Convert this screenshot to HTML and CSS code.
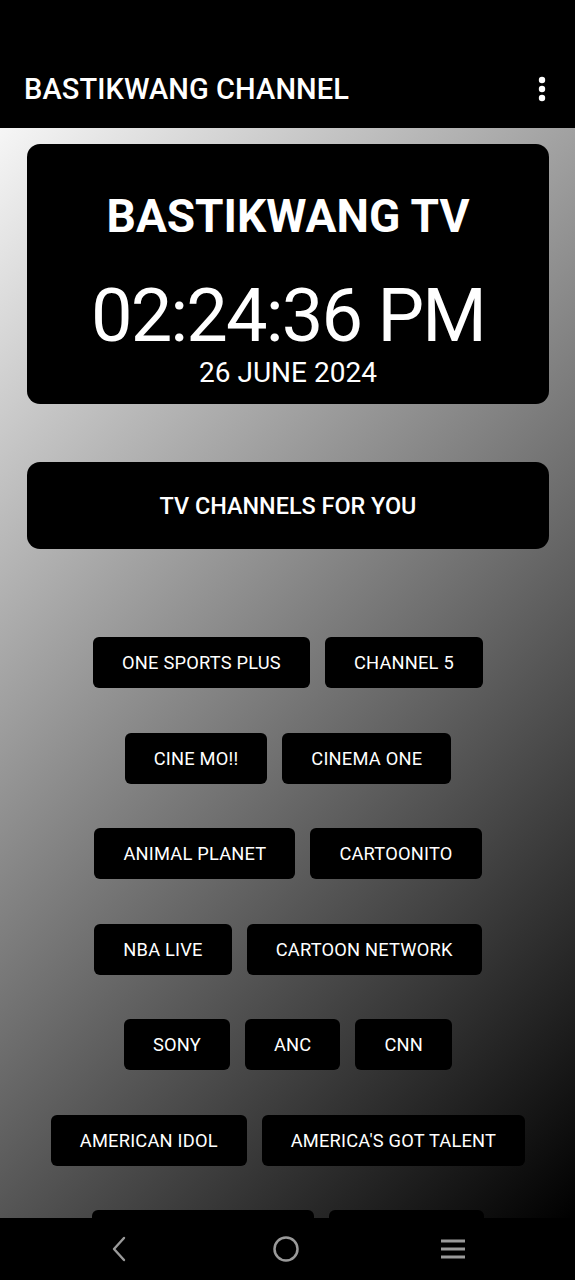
FILE: index.html
```html
<!DOCTYPE html>
<html lang="en">
<head>
    <meta charset="UTF-8">
    <meta name="viewport" content="width=device-width, initial-scale=1.0">
    <title>Bastikwang Channel</title>
    <link rel="stylesheet" href="styles.css">
</head>
<body>
    <div class="app">
        <header class="appbar">
            <h1>BASTIKWANG CHANNEL</h1>
            <button class="menu" aria-label="More options">
                <svg width="8" height="26" viewBox="0 0 8 26">
                    <circle cx="4" cy="4" r="3.2" fill="#fff"/>
                    <circle cx="4" cy="13" r="3.2" fill="#fff"/>
                    <circle cx="4" cy="22" r="3.2" fill="#fff"/>
                </svg>
            </button>
        </header>

        <main class="content">
            <section class="clock-card">
                <div class="clock-title">BASTIKWANG TV</div>
                <div class="clock-time" id="time">02:24:36 PM</div>
                <div class="clock-date" id="date">26 JUNE 2024</div>
            </section>

            <section class="banner">TV CHANNELS FOR YOU</section>

            <div class="channels">
                <div class="row">
                    <button class="channel">ONE SPORTS PLUS</button>
                    <button class="channel">CHANNEL 5</button>
                </div>
                <div class="row">
                    <button class="channel">CINE MO!!</button>
                    <button class="channel">CINEMA ONE</button>
                </div>
                <div class="row">
                    <button class="channel">ANIMAL PLANET</button>
                    <button class="channel">CARTOONITO</button>
                </div>
                <div class="row">
                    <button class="channel">NBA LIVE</button>
                    <button class="channel">CARTOON NETWORK</button>
                </div>
                <div class="row">
                    <button class="channel">SONY</button>
                    <button class="channel">ANC</button>
                    <button class="channel">CNN</button>
                </div>
                <div class="row">
                    <button class="channel">AMERICAN IDOL</button>
                    <button class="channel">AMERICA'S GOT TALENT</button>
                </div>
                <div class="row">
                    <button class="channel">HISTORY CHANNEL</button>
                    <button class="channel">GMA NEWS</button>
                </div>
            </div>
        </main>

        <nav class="navbar">
            <svg width="30" height="30" viewBox="0 0 30 30">
                <path d="M21 4 L11 15 L21 26" fill="none" stroke="#9a9a9a" stroke-width="2.4" stroke-linecap="round" stroke-linejoin="round"/>
            </svg>
            <svg width="30" height="30" viewBox="0 0 30 30">
                <circle cx="15" cy="15" r="11.5" fill="none" stroke="#9a9a9a" stroke-width="2.5"/>
            </svg>
            <svg width="30" height="30" viewBox="0 0 30 30">
                <path d="M3 7 H27 M3 15 H27 M3 23 H27" stroke="#9a9a9a" stroke-width="2.8"/>
            </svg>
        </nav>
    </div>
</body>
</html>
```

FILE: styles.css
```css
* {
    box-sizing: border-box;
}
body {
    margin: 0;
    padding: 0;
    font-family: Roboto, "Liberation Sans", sans-serif;
    background: #000;
    color: #fff;
}
.app {
    height: 1280px;
    display: flex;
    flex-direction: column;
    overflow: hidden;
}
.appbar {
    height: 128px;
    flex: none;
    background: #000;
    display: flex;
    align-items: flex-end;
    justify-content: space-between;
    padding: 0 24px 24px 24px;
}
.appbar h1 {
    margin: 0;
    font-size: 29px;
    font-weight: 500;
    line-height: 30px;
    letter-spacing: 0.1px;
}
.menu {
    background: none;
    border: none;
    padding: 0;
    margin-right: 5px;
    margin-bottom: 2px;
    display: flex;
}
.content {
    flex: 1;
    overflow: hidden;
    background: linear-gradient(135deg, #f6f6f6, #000);
    padding: 16px 26px 0 27px;
}
.clock-card {
    background: #000;
    border-radius: 13px;
    height: 260px;
    padding-top: 46px;
    text-align: center;
}
.clock-title {
    font-size: 46px;
    font-weight: 700;
    line-height: 52px;
}
.clock-time {
    font-size: 74px;
    line-height: 77px;
    letter-spacing: -1.9px;
    margin-top: 35px;
}
.clock-date {
    font-size: 28px;
    line-height: 30px;
    margin-top: 4px;
}
.banner {
    margin-top: 58px;
    height: 87px;
    background: #000;
    border-radius: 13px;
    display: flex;
    align-items: center;
    justify-content: center;
    font-size: 23.4px;
    font-weight: 500;
}
.channels {
    margin-top: 88px;
    display: flex;
    flex-direction: column;
    gap: 44.5px;
}
.row {
    display: flex;
    justify-content: center;
    gap: 15px;
}
.channel {
    height: 51px;
    padding: 0 29px;
    background: #000;
    color: #fff;
    border: none;
    border-radius: 6px;
    font-family: Roboto, "Liberation Sans", sans-serif;
    font-size: 18.3px;
    letter-spacing: 0.2px;
}
.navbar {
    height: 62px;
    flex: none;
    background: #000;
    display: flex;
    align-items: center;
    justify-content: space-between;
    padding: 0 107px 0 103px;
}
```
